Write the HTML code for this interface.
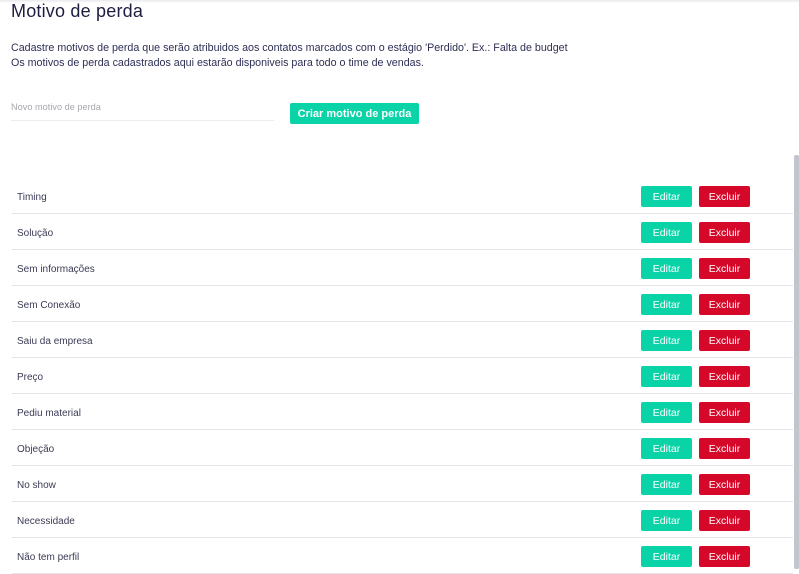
<!DOCTYPE html>
<html><head><meta charset="utf-8"><style>
*{margin:0;padding:0;box-sizing:border-box}
html,body{width:799px;height:569px;overflow:hidden;background:#fff;font-family:"Liberation Sans",sans-serif}
.top{position:absolute;left:0;top:0;width:799px;height:3px;background:linear-gradient(#e8e9ee,#fff)}
h1{position:absolute;left:11px;top:1px;font-size:18px;font-weight:normal;color:#1c1d3f;letter-spacing:0.2px}
.desc{position:absolute;left:11px;top:41px;font-size:10.7px;line-height:15px;color:#2e2f55}
.inp{position:absolute;left:11px;top:102px;width:263px;height:19px;border-bottom:1px solid #ececf0;font-size:9.2px;color:#a6a6ae}
.btn{position:absolute;color:#fff;font-size:11px;font-weight:bold;text-align:center;border-radius:2px}
.create{left:290px;top:103px;width:129px;height:21px;line-height:22px;background:#0bd3a8}
.row{position:absolute;left:12px;width:781px;height:36px;border-bottom:1px solid #e4e4e8;font-size:10px;color:#3a3b55}
.row span{position:absolute;left:5px;top:14px}
.ed,.ex{position:absolute;top:8px;height:21px;line-height:23px;width:51px;color:#fff;font-size:10.5px;text-align:center;border-radius:2px}
.ed{left:629px;background:#0bd3a8}
.ex{left:687px;background:#d6082a}
.sb{position:absolute;left:794px;top:155px;width:5px;height:414px;background:#c2c6cc;border-radius:2px}
</style></head><body>
<div class="top"></div>
<h1>Motivo de perda</h1>
<div class="desc">Cadastre motivos de perda que serão atribuidos aos contatos marcados com o estágio 'Perdido'. Ex.: Falta de budget<br>Os motivos de perda cadastrados aqui estarão disponiveis para todo o time de vendas.</div>
<div class="inp">Novo motivo de perda</div>
<div class="btn create">Criar motivo de perda</div>
<div class="row" style="top:178px"><span>Timing</span><div class="ed">Editar</div><div class="ex">Excluir</div></div>
<div class="row" style="top:214px"><span>Solução</span><div class="ed">Editar</div><div class="ex">Excluir</div></div>
<div class="row" style="top:250px"><span>Sem informações</span><div class="ed">Editar</div><div class="ex">Excluir</div></div>
<div class="row" style="top:286px"><span>Sem Conexão</span><div class="ed">Editar</div><div class="ex">Excluir</div></div>
<div class="row" style="top:322px"><span>Saiu da empresa</span><div class="ed">Editar</div><div class="ex">Excluir</div></div>
<div class="row" style="top:358px"><span>Preço</span><div class="ed">Editar</div><div class="ex">Excluir</div></div>
<div class="row" style="top:394px"><span>Pediu material</span><div class="ed">Editar</div><div class="ex">Excluir</div></div>
<div class="row" style="top:430px"><span>Objeção</span><div class="ed">Editar</div><div class="ex">Excluir</div></div>
<div class="row" style="top:466px"><span>No show</span><div class="ed">Editar</div><div class="ex">Excluir</div></div>
<div class="row" style="top:502px"><span>Necessidade</span><div class="ed">Editar</div><div class="ex">Excluir</div></div>
<div class="row" style="top:538px"><span>Não tem perfil</span><div class="ed">Editar</div><div class="ex">Excluir</div></div>
<div class="sb"></div>
</body></html>
